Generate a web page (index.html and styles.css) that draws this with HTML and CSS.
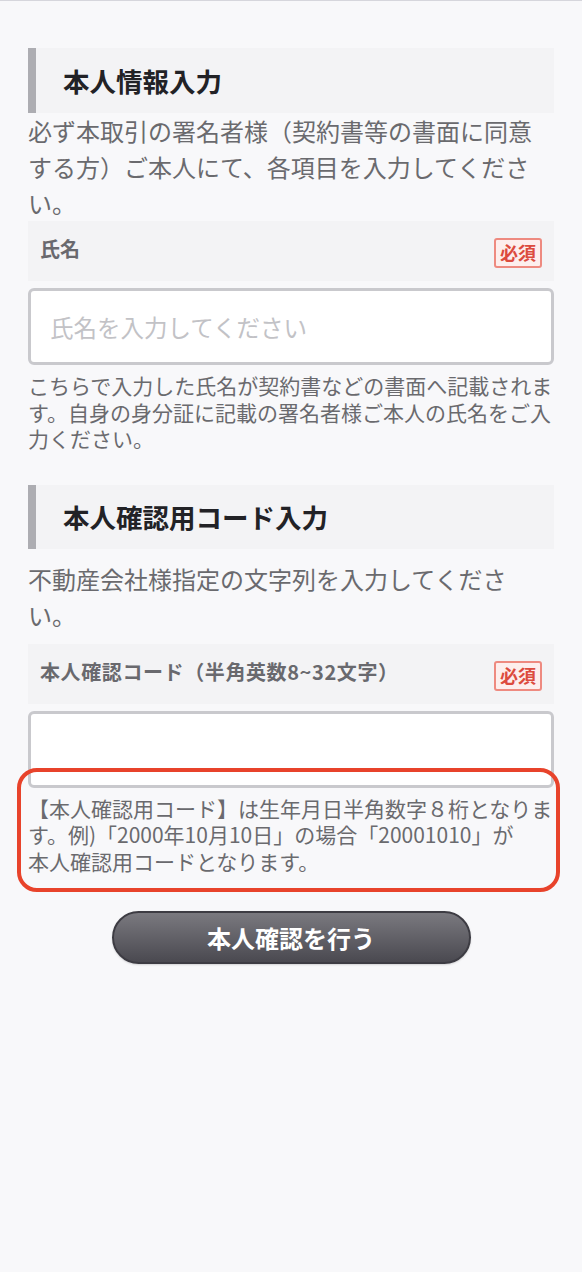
FILE: index.html
```html
<!DOCTYPE html>
<html lang="ja">
<head>
    <meta charset="UTF-8">
    <meta name="viewport" content="width=device-width, initial-scale=1.0">
    <title>本人確認</title>
    <link rel="stylesheet" href="styles.css">
</head>
<body>
    <div class="page">
        <div class="section">
            <h2 class="section-title">本人情報入力</h2>
            <p class="lead">必ず本取引の署名者様（契約書等の書面に同意する方）ご本人にて、各項目を入力してください。</p>

            <div class="field-label">
                <span>氏名</span>
                <span class="required">必須</span>
            </div>
            <input type="text" class="field-input" placeholder="氏名を入力してください">
            <p class="note">こちらで入力した氏名が契約書などの書面へ記載されます。自身の身分証に記載の署名者様ご本人の氏名をご入力ください。</p>
        </div>

        <div class="section section-second">
            <h2 class="section-title">本人確認用コード入力</h2>
            <p class="lead lead-spaced">不動産会社様指定の文字列を入力してください。</p>

            <div class="field-label">
                <span class="label-code">本人確認コード（半角英数8~32文字）</span>
                <span class="required">必須</span>
            </div>
            <input type="text" class="field-input">
            <div class="highlight">
                <span class="highlight-frame"></span>
                <p class="note">【本人確認用コード】は生年月日半角数字８桁となります。例)「2000年10月10日」の場合「20001010」が<br>本人確認用コードとなります。</p>
            </div>
        </div>

        <div class="actions">
            <button class="submit">本人確認を行う</button>
        </div>
    </div>
</body>
</html>
```

FILE: styles.css
```css
html {
    background-color: #e4e7ee;
}
body {
    margin: 0;
    font-family: "Noto Sans CJK JP", "Noto Sans", sans-serif;
    color: #6a6a6e;
}
.page {
    height: 1266px;
    background-color: #f8f8fa;
    border-top: 1px solid #d6d6dc;
    border-bottom: 2px solid #d3d3d8;
    padding: 47px 28px 0 28px;
}
.section-title {
    margin: 0;
    height: 65px;
    display: flex;
    align-items: center;
    padding-left: 27px;
    background-color: #f3f3f5;
    border-left: 8px solid #adadb2;
    font-size: 26.5px;
    font-weight: bold;
    color: #222226;
}
.section-second {
    margin-top: 33px;
}
.section-second .section-title {
    height: 64px;
}
.lead {
    margin: 0;
    font-size: 24px;
    line-height: 36px;
}
.lead-spaced {
    margin: 12px 0 11px 0;
}
.field-label {
    height: 60px;
    box-sizing: border-box;
    display: flex;
    justify-content: space-between;
    align-items: flex-start;
    padding: 13px 12px 0 12px;
    background-color: #f3f3f5;
    font-size: 20px;
    font-weight: bold;
    color: #69696e;
}
.label-code {
    letter-spacing: 0.6px;
}
.required {
    margin-top: 4px;
    padding: 0 4px;
    height: 30px;
    box-sizing: border-box;
    line-height: 25px;
    font-size: 18px;
    color: #dc4b3e;
    background-color: #fdeeed;
    border: 2px solid #ee8a80;
    border-radius: 3px;
}
.field-input {
    display: block;
    width: 100%;
    height: 77px;
    box-sizing: border-box;
    margin-top: 7px;
    padding: 0 19px;
    border: 3px solid #c9c9cd;
    border-radius: 6px;
    background-color: #ffffff;
    font-family: inherit;
    font-size: 23.5px;
    color: #333;
    outline: none;
}
.field-input::placeholder {
    color: #c2c2c6;
}
.note {
    margin: 7px 0 0 0;
    font-size: 21px;
    line-height: 26.5px;
    color: #6a6a6e;
}
.highlight {
    position: relative;
}
.highlight-frame {
    position: absolute;
    top: -27px;
    left: -11px;
    right: -6px;
    bottom: -18px;
    border: 4px solid #e8432b;
    border-radius: 20px;
}
.actions {
    display: flex;
    justify-content: center;
    margin-top: 37px;
}
.submit {
    width: 359px;
    height: 53px;
    border: 2px solid #3d3c43;
    border-radius: 27px;
    background: linear-gradient(#7a797f, #4a4950);
    box-shadow: 0 1px 2px rgba(0, 0, 0, 0.15);
    color: #ffffff;
    font-family: inherit;
    font-size: 24px;
    font-weight: bold;
}
```
